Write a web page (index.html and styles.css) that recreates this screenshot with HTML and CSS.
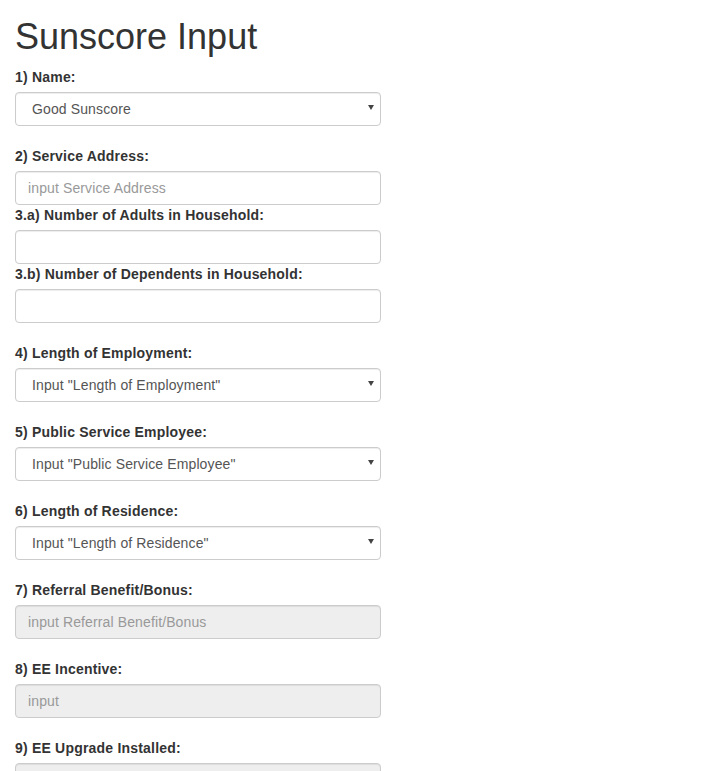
FILE: index.html
```html
<!DOCTYPE html>
<html>
<head>
<meta charset="utf-8">
<link rel="stylesheet" href="styles.css">
</head>
<body>
<div class="container">
  <h1 class="title">Sunscore Input</h1>
  <form class="form">
    <div class="group">
      <label class="label">1) Name:</label>
      <div class="select-wrap">
        <select class="control select"><option>Good Sunscore</option></select>
      </div>
    </div>
    <div class="group tight">
      <label class="label">2) Service Address:</label>
      <input class="control" type="text" placeholder="input Service Address">
    </div>
    <div class="group tight">
      <label class="label">3.a) Number of Adults in Household:</label>
      <input class="control" type="text">
    </div>
    <div class="group">
      <label class="label">3.b) Number of Dependents in Household:</label>
      <input class="control" type="text">
    </div>
    <div class="group">
      <label class="label">4) Length of Employment:</label>
      <div class="select-wrap">
        <select class="control select"><option>Input "Length of Employment"</option></select>
      </div>
    </div>
    <div class="group">
      <label class="label">5) Public Service Employee:</label>
      <div class="select-wrap">
        <select class="control select"><option>Input "Public Service Employee"</option></select>
      </div>
    </div>
    <div class="group">
      <label class="label">6) Length of Residence:</label>
      <div class="select-wrap">
        <select class="control select"><option>Input "Length of Residence"</option></select>
      </div>
    </div>
    <div class="group">
      <label class="label">7) Referral Benefit/Bonus:</label>
      <input class="control" type="text" placeholder="input Referral Benefit/Bonus" disabled>
    </div>
    <div class="group">
      <label class="label">8) EE Incentive:</label>
      <input class="control" type="text" placeholder="input" disabled>
    </div>
    <div class="group">
      <label class="label">9) EE Upgrade Installed:</label>
      <input class="control" type="text" disabled>
    </div>
  </form>
</div>
</body>
</html>
```
FILE: styles.css
```css
html, body {
  margin: 0;
  padding: 0;
  background: #fff;
}
body {
  font-family: "Liberation Sans", Arial, Helvetica, sans-serif;
  font-size: 14px;
  line-height: 20px;
  color: #333;
}
.container {
  padding: 0 15px;
}
.title {
  font-family: "Liberation Sans", Arial, sans-serif;
  font-size: 36px;
  font-weight: 500;
  line-height: 1.1;
  margin: 17px 0 10px 0;
  color: #333;
}
.form {
  width: 366px;
  display: flex;
  flex-direction: column;
}
.group {
  display: flex;
  flex-direction: column;
  margin-bottom: 20px;
}
.group.tight {
  margin-bottom: 0;
}
.label {
  font-weight: bold;
  font-size: 14px;
  line-height: 20px;
  letter-spacing: 0.2px;
  margin-bottom: 5px;
}
.control {
  box-sizing: border-box;
  display: block;
  width: 100%;
  height: 34px;
  margin: 0;
  padding: 6px 12px;
  font-family: "Liberation Sans", Arial, sans-serif;
  font-size: 14px;
  line-height: 20px;
  letter-spacing: 0.12px;
  color: #555;
  background: #fff;
  border: 1px solid #ccc;
  border-radius: 4px;
  box-shadow: inset 0 1px 1px rgba(0,0,0,0.075);
  outline: none;
}
.control::placeholder {
  color: #999;
  opacity: 1;
}
.control:disabled {
  background: #eee;
}
.select-wrap {
  position: relative;
}
.select {
  appearance: none;
  -webkit-appearance: none;
  padding-left: 16px;
}
.select-wrap::after {
  content: "";
  position: absolute;
  right: 7px;
  top: 13px;
  width: 0;
  height: 0;
  border-left: 3px solid transparent;
  border-right: 3px solid transparent;
  border-top: 5px solid #444;
  pointer-events: none;
}
```
